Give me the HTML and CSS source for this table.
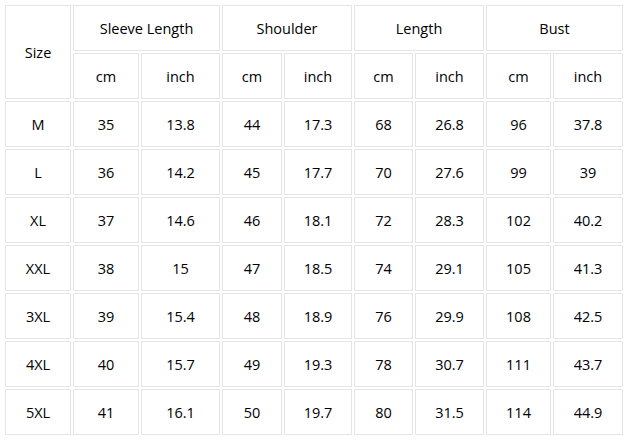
FILE: index.html
```html
<!DOCTYPE html>
<html>
<head>
<meta charset="utf-8">
<link rel="stylesheet" href="styles.css">
</head>
<body>
<table class="size-table">
  <colgroup>
    <col class="c-size"><col class="c1"><col class="c2"><col class="c3"><col class="c4"><col class="c5"><col class="c6"><col class="c7"><col class="c8">
  </colgroup>
  <thead>
    <tr>
      <th rowspan="2">Size</th>
      <th colspan="2">Sleeve Length</th>
      <th colspan="2">Shoulder</th>
      <th colspan="2">Length</th>
      <th colspan="2">Bust</th>
    </tr>
    <tr>
      <th>cm</th><th>inch</th><th>cm</th><th>inch</th><th>cm</th><th>inch</th><th>cm</th><th>inch</th>
    </tr>
  </thead>
  <tbody>
    <tr><td>M</td><td>35</td><td>13.8</td><td>44</td><td>17.3</td><td>68</td><td>26.8</td><td>96</td><td>37.8</td></tr>
    <tr><td>L</td><td>36</td><td>14.2</td><td>45</td><td>17.7</td><td>70</td><td>27.6</td><td>99</td><td>39</td></tr>
    <tr><td>XL</td><td>37</td><td>14.6</td><td>46</td><td>18.1</td><td>72</td><td>28.3</td><td>102</td><td>40.2</td></tr>
    <tr><td>XXL</td><td>38</td><td>15</td><td>47</td><td>18.5</td><td>74</td><td>29.1</td><td>105</td><td>41.3</td></tr>
    <tr><td>3XL</td><td>39</td><td>15.4</td><td>48</td><td>18.9</td><td>76</td><td>29.9</td><td>108</td><td>42.5</td></tr>
    <tr><td>4XL</td><td>40</td><td>15.7</td><td>49</td><td>19.3</td><td>78</td><td>30.7</td><td>111</td><td>43.7</td></tr>
    <tr><td>5XL</td><td>41</td><td>16.1</td><td>50</td><td>19.7</td><td>80</td><td>31.5</td><td>114</td><td>44.9</td></tr>
  </tbody>
</table>
</body>
</html>
```
FILE: styles.css
```css
html, body {
  margin: 0;
  background: #ffffff;
}
body {
  padding: 3px;
  font-family: "Open Sans", "Noto Sans", sans-serif;
  font-size: 14.5px;
  color: #000000;
}
.size-table {
  table-layout: fixed;
  width: 622px;
  border-collapse: separate;
  border-spacing: 2px;
}
.c-size { width: 66px; }
.c1 { width: 66px; }
.c2 { width: 79px; }
.c3 { width: 60px; }
.c4 { width: 68px; }
.c5 { width: 59px; }
.c6 { width: 69px; }
.c7 { width: 65px; }
.c8 { width: 70px; }
.size-table th,
.size-table td {
  box-sizing: border-box;
  height: 46px;
  padding: 0;
  border: 1px solid #e5e5e5;
  text-align: center;
  vertical-align: middle;
  font-weight: normal;
  white-space: nowrap;
}
```
